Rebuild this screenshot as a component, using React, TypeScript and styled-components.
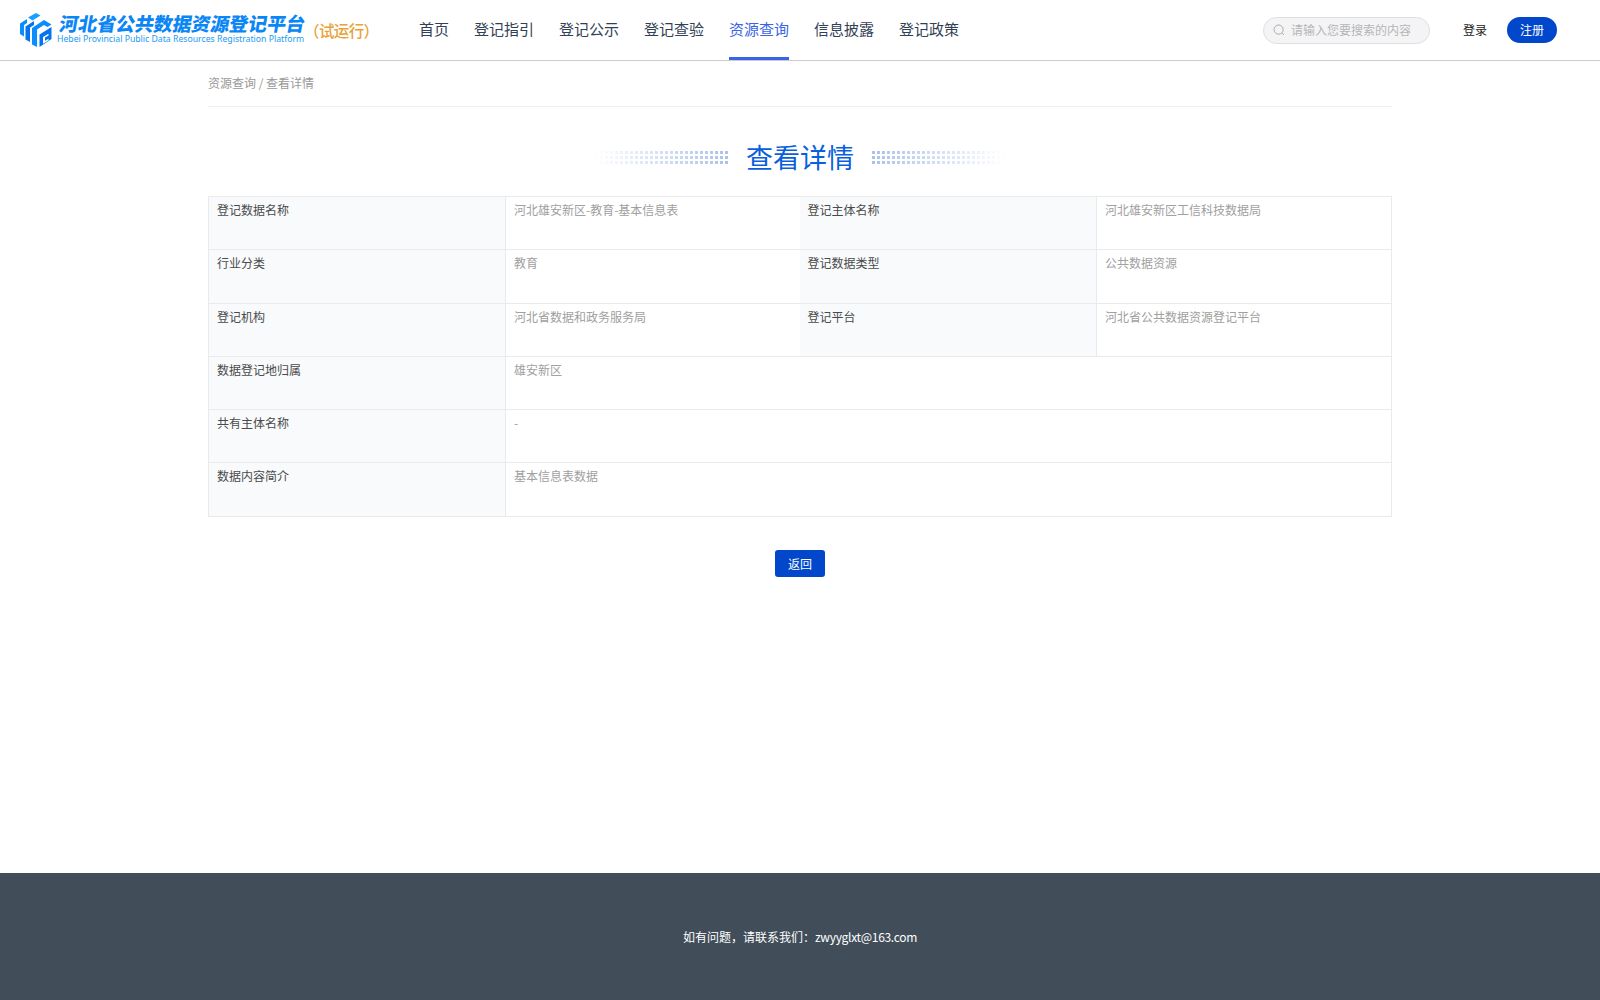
import { Fragment } from "react";
import styled, { createGlobalStyle } from "styled-components";

const navItems = ["首页", "登记指引", "登记公示", "登记查验", "资源查询", "信息披露", "登记政策"];

const rows = [
  [
    ["登记数据名称", "河北雄安新区-教育-基本信息表"],
    ["登记主体名称", "河北雄安新区工信科技数据局"],
  ],
  [
    ["行业分类", "教育"],
    ["登记数据类型", "公共数据资源"],
  ],
  [
    ["登记机构", "河北省数据和政务服务局"],
    ["登记平台", "河北省公共数据资源登记平台"],
  ],
  [["数据登记地归属", "雄安新区"]],
  [["共有主体名称", "-"]],
  [["数据内容简介", "基本信息表数据"]],
];

const App = () => (
  <Page>
    <GlobalStyle />
    <Header>
      <Brand>
        <LogoMark />
        <BrandText>
          <BrandTitle>河北省公共数据资源登记平台</BrandTitle>
          <BrandSub>Hebei Provincial Public Data Resources Registration Platform</BrandSub>
        </BrandText>
        <TrialTag>（试运行）</TrialTag>
      </Brand>
      <Nav>
        {navItems.map((item) => (
          <NavItem key={item} $active={item === "资源查询"}>
            {item}
          </NavItem>
        ))}
      </Nav>
      <HeaderRight>
        <SearchBox>
          <svg width="12" height="12" viewBox="0 0 12 12" fill="none" stroke="#a8abb2" strokeWidth="1">
            <circle cx="5.6" cy="5.6" r="4.6" />
            <path d="M9 9l2 2" />
          </svg>
          <SearchHint>请输入您要搜索的内容</SearchHint>
        </SearchBox>
        <LoginLink>登录</LoginLink>
        <RegisterButton>注册</RegisterButton>
      </HeaderRight>
    </Header>
    <Main>
      <Breadcrumb>资源查询 / 查看详情</Breadcrumb>
      <TitleRow>
        <Dots $side="left" />
        <Title>查看详情</Title>
        <Dots $side="right" />
      </TitleRow>
      <DetailTable>
        <colgroup>
          <col width="297" />
          <col width="294" />
          <col width="297" />
          <col width="295" />
        </colgroup>
        <tbody>
          {rows.map((row) => (
            <tr key={row[0][0]}>
              {row.map(([label, value]) => (
                <Fragment key={label}>
                  <LabelCell>{label}</LabelCell>
                  <ValueCell colSpan={row.length === 1 ? 3 : 1}>{value}</ValueCell>
                </Fragment>
              ))}
            </tr>
          ))}
        </tbody>
      </DetailTable>
      <Actions>
        <BackButton>返回</BackButton>
      </Actions>
    </Main>
    <Footer>
      如有问题，请联系我们：<FooterMail>zwyyglxt@163.com</FooterMail>
    </Footer>
  </Page>
);

const LogoMark = () => (
  <svg width="32" height="36" viewBox="0 0 32 36">
    <path d="M0 11.5L7 7v4L4 13v11.5L0 22z" fill="#0a8dff" />
    <path d="M5.5 14.5L14 9v4l-4 2.5V30l-4.5-2.5z" fill="#0574f0" />
    <path d="M8 5.5L16 1l4.5 2.5-8 5z" fill="#18a0ff" />
    <path d="M12 16L24 8l7.5 4.5-4 2.5-3.5-2-7 4.5V35L12 32.5z" fill="#0a8dff" />
    <path d="M19.5 22.5L31.5 15v12L19.5 35z" fill="#0574f0" />
    <path d="M23 25l5.5-3.3v1.8l-3.5 2.1v3.2l3.5-2.1v1.8L23 31.8z" fill="#fff" />
  </svg>
);

const GlobalStyle = createGlobalStyle`
  html, body {
    margin: 0;
    padding: 0;
    background: #fff;
    font-family: "Noto Sans CJK SC", "Noto Sans", sans-serif;
  }
  * {
    box-sizing: border-box;
  }
`;

const Page = styled.div`
  display: flex;
  flex-direction: column;
  min-height: 1000px;
`;

const Header = styled.header`
  display: flex;
  align-items: stretch;
  height: 61px;
  padding-left: 20px;
  border-bottom: 1px solid #c9cbcf;
`;

const Brand = styled.div`
  display: flex;
  align-items: center;
  width: 399px;
`;

const BrandText = styled.div`
  display: flex;
  flex-direction: column;
  margin-left: 6px;
  margin-top: -3px;
  width: 248px;
`;

const BrandTitle = styled.div`
  font-size: 18.9px;
  line-height: 20px;
  font-weight: 900;
  white-space: nowrap;
  color: #0a86f5;
  transform: skewX(-10deg);
  transform-origin: left bottom;
`;

const BrandSub = styled.div`
  margin: 1px 0 0 -1px;
  font-family: "Noto Sans", sans-serif;
  font-size: 8.7px;
  line-height: 11px;
  white-space: nowrap;
  color: #1a9bf5;
`;

const TrialTag = styled.div`
  margin-left: -2px;
  font-size: 15.5px;
  font-weight: 500;
  white-space: nowrap;
  color: #e8a23a;
  letter-spacing: -0.6px;
`;

const Nav = styled.nav`
  display: flex;
  gap: 25px;
`;

const NavItem = styled.a<{ $active?: boolean }>`
  display: flex;
  align-items: center;
  height: 60px;
  font-size: 15px;
  color: ${(p) => (p.$active ? "#3964e4" : "#333f55")};
  border-bottom: 3px solid ${(p) => (p.$active ? "#3964e4" : "transparent")};
`;

const HeaderRight = styled.div`
  display: flex;
  align-items: center;
  margin-left: auto;
  padding-right: 43px;
`;

const SearchBox = styled.div`
  display: flex;
  align-items: center;
  gap: 6px;
  width: 167px;
  height: 27px;
  padding-left: 9px;
  background: #f4f4f5;
  border: 1px solid #dcdfe6;
  border-radius: 14px;
`;

const SearchHint = styled.span`
  font-size: 12px;
  padding-bottom: 1px;
  color: #b4b6ba;
  white-space: nowrap;
`;

const LoginLink = styled.a`
  margin-left: 33px;
  padding-bottom: 2px;
  font-size: 12px;
  color: #222;
`;

const RegisterButton = styled.button`
  width: 50px;
  height: 26px;
  margin-left: 20px;
  padding: 0 0 2px;
  border: none;
  border-radius: 13px;
  background: #0047cc;
  color: #fff;
  font-family: inherit;
  font-size: 12px;
`;

const Main = styled.main`
  flex: 1;
  width: 1184px;
  margin: 0 auto;
`;

const Breadcrumb = styled.div`
  height: 46px;
  padding-top: 13px;
  border-bottom: 1px solid #eee;
  font-size: 12px;
  line-height: 18px;
  color: #999;
`;

const TitleRow = styled.div`
  display: flex;
  align-items: center;
  justify-content: center;
  gap: 17px;
  height: 42px;
  margin-top: 29px;
  margin-bottom: 18px;
`;

const Dots = styled.div<{ $side: "left" | "right" }>`
  width: 135px;
  height: 15px;
  background-image: radial-gradient(circle at center, #a9c0ec 1.4px, transparent 1.9px);
  background-size: 5px 5px;
  background-position: ${(p) => (p.$side === "left" ? "right" : "left")} top;
  mask-image: linear-gradient(
    ${(p) => (p.$side === "left" ? "to right" : "to left")},
    transparent,
    #000
  );
`;

const Title = styled.h1`
  margin: 0;
  font-size: 27px;
  line-height: 42px;
  font-weight: 400;
  color: #0a5fdc;
`;

const DetailTable = styled.table`
  width: 1183px;
  table-layout: fixed;
  border-collapse: collapse;
  border: 1px solid #e8eaec;
  font-size: 12px;
  line-height: 18px;
  tr {
    height: 53.3px;
  }
  td {
    vertical-align: top;
    padding: 4px 8px;
    border-top: 1px solid #e8eaec;
    border-bottom: 1px solid #e8eaec;
  }
`;

const LabelCell = styled.td`
  background: #f9fafc;
  color: #4a4a4a;
  border-right: 1px solid #e8eaec;
`;

const ValueCell = styled.td`
  color: #a0a0a0;
`;

const Actions = styled.div`
  display: flex;
  justify-content: center;
  margin-top: 33px;
`;

const BackButton = styled.button`
  width: 50px;
  height: 27px;
  padding: 0;
  border: none;
  border-radius: 3px;
  background: #0047cc;
  color: #fff;
  font-family: inherit;
  font-size: 12px;
`;

const Footer = styled.footer`
  display: flex;
  align-items: center;
  justify-content: center;
  height: 127px;
  background: #414e5a;
  color: #fff;
  font-size: 12px;
`;

const FooterMail = styled.span`
  letter-spacing: -0.3px;
`;

export default App;
